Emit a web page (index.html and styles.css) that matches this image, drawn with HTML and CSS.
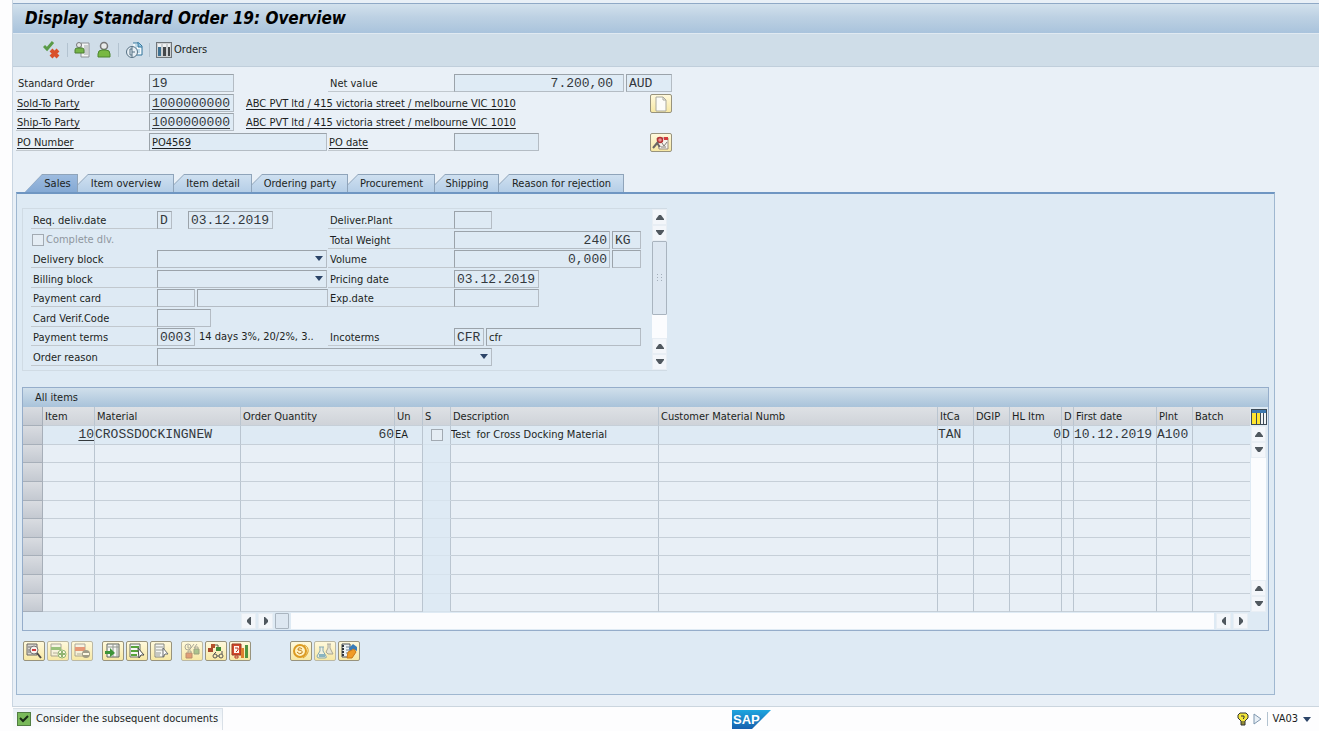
FILE: index.html
```html
<!DOCTYPE html>
<html lang="en">
<head>
    <meta charset="UTF-8">
    <meta name="viewport" content="width=device-width, initial-scale=1.0">
    <title>Display Standard Order 19: Overview</title>
    <link rel="stylesheet" href="styles.css">
</head>
<body>
    <!-- Shared arrow shapes -->
    <svg class="defs" width="0" height="0">
        <symbol id="up" viewBox="0 0 8 6"><path d="M0 6V5L3 1H5L8 5V6Z" fill="#50585f"/></symbol>
        <symbol id="down" viewBox="0 0 8 6"><path d="M0 0V1L3 5H5L8 1V0Z" fill="#50585f"/></symbol>
        <symbol id="left" viewBox="0 0 6 8"><path d="M5 0V8H4L1 5V3L4 0Z" fill="#50585f"/></symbol>
        <symbol id="right" viewBox="0 0 6 8"><path d="M1 0V8H2L5 5V3L2 0Z" fill="#50585f"/></symbol>
    </svg>

    <div class="window">
        <header>
            <h1 class="title-bar">Display Standard Order 19: Overview</h1>
            <div class="toolbar">
                <button class="tool" aria-label="Display or change">
                    <svg width="18" height="18" viewBox="0 0 18 18"><path d="M1 5L4 8L10 1" fill="none" stroke="#5a9b48" stroke-width="3"/><path d="M8 9L15 16M15 9L8 16" stroke="#d9502a" stroke-width="4"/></svg>
                </button>
                <span class="sep"></span>
                <button class="tool" aria-label="Header details">
                    <svg width="18" height="18" viewBox="0 0 18 18"><path d="M7 2H15V16H7Z" fill="#f3f4f4" stroke="#8d9297"/><path d="M10 5H14M10 7H14M10 9H14M10 11H14M10 13H14" stroke="#a1a6aa"/><circle cx="5" cy="4" r="2.5" fill="#e6e8e8" stroke="#777"/><path d="M1 12V9Q1 7 3 7H8Q10 7 10 9V12Z" fill="#74b447" stroke="#4d7d34"/></svg>
                </button>
                <button class="tool tool-person" aria-label="Sold-to party">
                    <svg width="16" height="18" viewBox="0 0 16 18"><circle cx="8" cy="5" r="3.5" fill="#e9ebea" stroke="#777" stroke-width="1.5"/><path d="M2 16V13Q2 9 6 9H10Q14 9 14 13V16Z" fill="#78b843" stroke="#4d8530"/></svg>
                </button>
                <span class="sep"></span>
                <button class="tool" aria-label="Document flow">
                    <svg width="18" height="18" viewBox="0 0 18 18"><path d="M8 2H14L17 5V14H9" fill="#f6fafc" stroke="#30749c"/><path d="M13 1V6H17" fill="#8cc0dd" stroke="#30749c"/><path d="M10 3H12V8H15V12H11Z" fill="#bcdaea"/><circle cx="7" cy="11" r="5.5" fill="#e6eef4" stroke="#557083"/><path d="M7 6V16M7 11H10M7 8H5V14H7" fill="none" stroke="#557083"/></svg>
                </button>
                <span class="sep"></span>
                <button class="tool tool-orders">
                    <svg width="16" height="16" viewBox="0 0 16 16"><rect x="0.5" y="0.5" width="15" height="15" fill="#cdd0d2" stroke="#6f7579"/><path d="M2 2H5V5H2ZM7 2H10V5H7ZM12 2H14V5H12Z" fill="#f0f2f3"/><path d="M2 5H5V14H2Z" fill="#3e7192"/><path d="M7 5H10V14H7ZM12 5H14V14H12Z" fill="#45484b"/></svg>
                    Orders
                </button>
            </div>
        </header>

        <main>
            <form class="order-head">
                <label class="lbl" for="order">Standard Order</label>
                <div class="cell wide"><input class="f mono w-date" id="order" value="19" readonly></div>
                <label class="lbl" for="net">Net value</label>
                <div class="cell wide"><input class="f mono right grow net" id="net" value="7.200,00" readonly><input class="f mono w-cur" aria-label="Currency" value="AUD" readonly></div>

                <label class="lbl linked" for="sold">Sold-To Party</label>
                <div class="cell"><input class="f mono linked w-date" id="sold" value="1000000000" readonly></div>
                <a class="party" href="#">ABC PVT ltd / 415 victoria street / melbourne VIC 1010</a>
                <button type="button" class="btn btn-head" aria-label="Create">
                    <svg width="16" height="16" viewBox="0 0 16 16"><path d="M3 1H10L13 4V15H3Z" fill="#fcfcf8" stroke="#aaa99c"/><path d="M10 1V4H13" fill="none" stroke="#aaa99c"/></svg>
                </button>

                <label class="lbl linked" for="ship">Ship-To Party</label>
                <div class="cell"><input class="f mono linked w-date" id="ship" value="1000000000" readonly></div>
                <a class="party" href="#">ABC PVT ltd / 415 victoria street / melbourne VIC 1010</a>
                <span></span>

                <label class="lbl linked" for="po">PO Number</label>
                <div class="cell wide"><input class="f linked w-po" id="po" value="PO4569" readonly></div>
                <label class="lbl linked" for="podate">PO date</label>
                <div class="cell"><input class="f mono w-date" id="podate" readonly></div>
                <button type="button" class="btn btn-head" aria-label="Header details">
                    <svg width="18" height="16" viewBox="0 0 18 16"><path d="M5 3H16V14H7Z" fill="#f6f3ed" stroke="#9a8c80"/><path d="M12 2H16V5H12Z" fill="#d23b3c"/><path d="M10 8L12 11L15 7M9 12H14" fill="none" stroke="#837c76"/><circle cx="8" cy="5" r="2.5" fill="#e89290" stroke="#b73435" stroke-width="1.5"/><path d="M6 7L1 13M5 8L8 12" stroke="#6b6663" stroke-width="2"/></svg>
                </button>
            </form>

            <div class="tabs" role="tablist">
                <button class="tab active" role="tab" aria-selected="true"><span>Sales</span></button>
                <button class="tab t-96" role="tab"><span>Item overview</span></button>
                <button class="tab t-78" role="tab"><span>Item detail</span></button>
                <button class="tab t-96" role="tab"><span>Ordering party</span></button>
                <button class="tab t-87" role="tab"><span>Procurement</span></button>
                <button class="tab t-64" role="tab"><span>Shipping</span></button>
                <button class="tab t-125" role="tab"><span>Reason for rejection</span></button>
            </div>

            <section class="panel">
                <div class="sales-box">
                    <form class="sales">
                        <label class="lbl" for="req">Req. deliv.date</label>
                        <div class="cell"><input class="f mono w-one" aria-label="Date type" value="D" readonly><input class="f mono w-date after-one" id="req" value="03.12.2019" readonly></div>
                        <label class="lbl" for="plant">Deliver.Plant</label>
                        <div class="cell"><input class="f mono w-four" id="plant" readonly></div>

                        <div class="check-row"><input type="checkbox" class="check" id="complete" disabled><label for="complete">Complete dlv.</label></div>
                        <span></span>
                        <label class="lbl" for="weight">Total Weight</label>
                        <div class="cell"><input class="f mono right grow" id="weight" value="240" readonly><input class="f mono w-unit" aria-label="Weight unit" value="KG" readonly></div>

                        <label class="lbl" for="dblock">Delivery block</label>
                        <div class="cell drop"><select class="f" id="dblock"><option></option></select></div>
                        <label class="lbl" for="volume">Volume</label>
                        <div class="cell"><input class="f mono right grow" id="volume" value="0,000" readonly><input class="f mono w-unit" aria-label="Volume unit" readonly></div>

                        <label class="lbl" for="bblock">Billing block</label>
                        <div class="cell drop"><select class="f" id="bblock"><option></option></select></div>
                        <label class="lbl" for="pricing">Pricing date</label>
                        <div class="cell"><input class="f mono w-date" id="pricing" value="03.12.2019" readonly></div>

                        <label class="lbl" for="card">Payment card</label>
                        <div class="cell"><input class="f mono w-four" id="card" readonly><input class="f mono grow" aria-label="Card number" readonly></div>
                        <label class="lbl" for="exp">Exp.date</label>
                        <div class="cell"><input class="f mono w-date" id="exp" readonly></div>

                        <label class="lbl" for="verif">Card Verif.Code</label>
                        <div class="cell"><input class="f mono w-verif" id="verif" readonly></div>
                        <span></span>
                        <span></span>

                        <label class="lbl" for="terms">Payment terms</label>
                        <div class="cell"><input class="f mono w-four" id="terms" value="0003" readonly><span class="terms-text">14 days 3%, 20/2%, 3..</span></div>
                        <label class="lbl" for="inco">Incoterms</label>
                        <div class="cell"><input class="f mono w-inco" id="inco" value="CFR" readonly><input class="f grow" aria-label="Incoterms place" value="cfr" readonly></div>

                        <label class="lbl" for="reason">Order reason</label>
                        <div class="cell drop reason"><select class="f" id="reason"><option></option></select></div>
                    </form>
                    <div class="vscroll">
                        <button class="arrow" aria-label="Top"><svg width="8" height="6"><use href="#up"/></svg></button>
                        <button class="arrow" aria-label="Down"><svg width="8" height="6"><use href="#down"/></svg></button>
                        <div class="thumb"><svg width="6" height="8" viewBox="0 0 6 8"><path d="M0 0H1V1H0ZM4 0H5V1H4ZM0 3H1V4H0ZM4 3H5V4H4ZM0 6H1V7H0ZM4 6H5V7H4Z" fill="#a3aeba"/></svg></div>
                        <div class="track"></div>
                        <button class="arrow" aria-label="Up"><svg width="8" height="6"><use href="#up"/></svg></button>
                        <button class="arrow" aria-label="Bottom"><svg width="8" height="6"><use href="#down"/></svg></button>
                    </div>
                </div>

                <div class="items">
                    <h2 class="items-title">All items</h2>
                    <div class="items-body">
                        <table class="grid">
                            <colgroup>
                                <col class="c20"><col class="c52"><col class="c146"><col class="c154"><col class="c28"><col class="c28"><col class="c208"><col><col class="c36"><col class="c36"><col class="c52"><col class="c12"><col class="c83"><col class="c36"><col class="c57">
                            </colgroup>
                            <thead>
                                <tr><th class="sel"></th><th>Item</th><th>Material</th><th>Order Quantity</th><th>Un</th><th>S</th><th>Description</th><th>Customer Material Numb</th><th>ItCa</th><th>DGIP</th><th>HL Itm</th><th>D</th><th>First date</th><th>Plnt</th><th>Batch</th></tr>
                            </thead>
                            <tbody id="rows">
                                <tr class="filled"><td class="sel"></td><td class="mono right"><a href="#">10</a></td><td class="mono">CROSSDOCKINGNEW</td><td class="mono right">60</td><td>EA</td><td class="st"><input type="checkbox" class="check" aria-label="Schedule status" disabled></td><td>Test&nbsp; for Cross Docking Material</td><td></td><td class="mono">TAN</td><td></td><td class="mono right">0</td><td class="mono">D</td><td class="mono">10.12.2019</td><td class="mono">A100</td><td></td></tr>
                            </tbody>
                        </table>
                        <div class="side">
                            <button class="config" aria-label="Table settings"><svg width="16" height="16" viewBox="0 0 16 16"><path d="M0 0H16V16H0Z" fill="#3c4a56"/><path d="M1 1H15V4H1Z" fill="#3d78b0"/><path d="M1 4H5V15H1ZM6 4H9V15H6Z" fill="#ffe52f"/><path d="M10 4H12V15H10ZM13 4H15V15H13Z" fill="#f1f4f6"/></svg></button>
                            <div class="vscroll">
                                <button class="arrow" aria-label="First row"><svg width="8" height="6"><use href="#up"/></svg></button>
                                <button class="arrow" aria-label="Next row"><svg width="8" height="6"><use href="#down"/></svg></button>
                                <div class="track"></div>
                                <button class="arrow" aria-label="Previous row"><svg width="8" height="6"><use href="#up"/></svg></button>
                                <button class="arrow" aria-label="Last row"><svg width="8" height="6"><use href="#down"/></svg></button>
                            </div>
                        </div>
                    </div>
                    <div class="hscroll">
                        <button class="arrow" aria-label="First column"><svg width="6" height="8"><use href="#left"/></svg></button>
                        <button class="arrow" aria-label="Next column"><svg width="6" height="8"><use href="#right"/></svg></button>
                        <div class="thumb"></div>
                        <div class="track"></div>
                        <button class="arrow" aria-label="Previous column"><svg width="6" height="8"><use href="#left"/></svg></button>
                        <button class="arrow" aria-label="Last column"><svg width="6" height="8"><use href="#right"/></svg></button>
                    </div>
                </div>

                <div class="actions">
                    <div class="group">
                        <button class="btn" aria-label="Item details"><svg width="18" height="16" viewBox="0 0 18 16"><path d="M2 1H12V12H2Z" fill="#d9d6d0" stroke="#6b6762"/><path d="M3 4H11M3 7H6M3 9H6" stroke="#777"/><circle cx="9" cy="7" r="4" fill="#f8f1ed" stroke="#777"/><path d="M7 7H11" stroke="#cf3a3a" stroke-width="2"/><path d="M12 10L16 15" stroke="#4c4a48" stroke-width="2"/></svg></button>
                        <button class="btn pale" aria-label="Insert row"><svg width="18" height="16" viewBox="0 0 18 16"><path d="M2 1H12V13H2Z" fill="#f3f3ee" stroke="#777"/><path d="M2 4H12V7H2Z" fill="#5aa14a"/><path d="M4 10H9" stroke="#888"/><circle cx="13" cy="11" r="4" fill="#fff" stroke="#4a8f45"/><path d="M13 8V14M10 11H16" stroke="#4a8f45" stroke-width="2"/></svg></button>
                        <button class="btn pale" aria-label="Delete row"><svg width="18" height="16" viewBox="0 0 18 16"><path d="M2 1H12V13H2Z" fill="#f3f3ee" stroke="#777"/><path d="M2 4H12V8H2Z" fill="#d95e42"/><path d="M4 11H9" stroke="#888"/><circle cx="13" cy="11" r="4" fill="#666"/><path d="M10 11H16" stroke="#fff" stroke-width="2"/></svg></button>
                    </div>
                    <div class="group">
                        <button class="btn" aria-label="Position"><svg width="18" height="16" viewBox="0 0 18 16"><path d="M3 1H15V14H3Z" fill="#f5f6f2" stroke="#5d625d"/><path d="M9 1V14M4 4H15M13 2V14" stroke="#92988f"/><path d="M1 8H6V5L11 10L6 14V11H1Z" fill="#3c9438"/></svg></button>
                        <button class="btn" aria-label="Select all"><svg width="18" height="16" viewBox="0 0 18 16"><path d="M2 1H12V14H2Z" fill="#f5f6f2" stroke="#6b7068"/><path d="M3 4H11M3 8H11M3 12H9" stroke="#55a33a" stroke-width="2"/><path d="M10 5L16 12H13L11 15Z" fill="#fff" stroke="#464946"/></svg></button>
                        <button class="btn" aria-label="Deselect all"><svg width="18" height="16" viewBox="0 0 18 16"><path d="M3 1H12V14H3Z" fill="#f5f6f2" stroke="#85877f"/><path d="M4 4H11M4 7H11M4 10H9M4 12H8" stroke="#989b94"/><path d="M11 5L16 11H13L11 14Z" fill="#fff" stroke="#696d70"/></svg></button>
                    </div>
                    <div class="group">
                        <button class="btn pale" aria-label="Availability"><svg width="18" height="16" viewBox="0 0 18 16"><circle cx="5" cy="4" r="3" fill="none" stroke="#777"/><path d="M5 2V5H7M8 5L11 1M11 5L14 1" fill="none" stroke="#777"/><path d="M11 6H16V11H11Z" fill="#75a66e" stroke="#5f7058"/><path d="M3 10H9V15H3Z" fill="#d26a51" stroke="#915244"/><path d="M5 10V8H8V10M12 6V4H15V6" fill="none" stroke="#777"/></svg></button>
                        <button class="btn" aria-label="Schedule lines"><svg width="18" height="16" viewBox="0 0 18 16"><path d="M4 1H8V5H4Z" fill="#b4512b"/><path d="M1 5H6V9H1Z" fill="#a8482b"/><path d="M9 4H14V8H9Z" fill="#3f8a36"/><path d="M8 2H11V4" fill="none" stroke="#5e564b"/><circle cx="8" cy="13" r="2" fill="none" stroke="#555"/><circle cx="14" cy="13" r="2" fill="none" stroke="#555"/><path d="M10 13H12M7 11L9 9M15 11V8" stroke="#555"/></svg></button>
                        <button class="btn" aria-label="Item conditions"><svg width="18" height="16" viewBox="0 0 18 16"><path d="M1 1H10V12H1Z" fill="#d4472b" stroke="#963a25"/><path d="M3 3H8V10H3Z" fill="#fff5ed"/><path d="M4 5H7V7L5 9M4 13H7V15H4Z" fill="none" stroke="#b73b26"/><path d="M10 5H13V15H10Z" fill="#df7e2e"/><path d="M14 2H17V15H14Z" fill="#4f9340"/></svg></button>
                    </div>
                    <div class="group apart">
                        <button class="btn" aria-label="Pricing"><svg width="18" height="16" viewBox="0 0 18 16"><circle cx="8" cy="8" r="6" fill="#fff2c2" stroke="#dc9b22" stroke-width="2"/><path d="M12 2Q17 4 16 9Q15 13 11 15" fill="none" stroke="#dc9b22"/><path d="M10 6Q6 3 6 7Q11 7 10 10Q7 12 5 9" fill="none" stroke="#c07b16"/></svg></button>
                        <button class="btn pale" aria-label="Batch"><svg width="18" height="16" viewBox="0 0 18 16"><path d="M11 1H15M12 1V5L10 9L12 11H17L16 9L14 5V1" fill="#d9dde0" stroke="#777"/><path d="M3 4H8M4 4V8L1 13Q1 15 3 15H9Q11 15 10 13L7 8V4" fill="#eaf3f8" stroke="#3a7ba8"/><path d="M3 11H9V14H3Z" fill="#3f8fca"/></svg></button>
                        <button class="btn" aria-label="Configuration"><svg width="18" height="16" viewBox="0 0 18 16"><path d="M2 1H10V14H2Z" fill="#edf2f5" stroke="#4b5157"/><path d="M2 3H4M2 6H4M2 9H4M2 12H4" stroke="#30363b" stroke-width="2"/><path d="M6 4H10M6 7H9M6 10H8" stroke="#6b7d8b"/><path d="M9 5L13 1L17 4V8L13 6L10 9Z" fill="#3a7db8"/><path d="M8 9L14 6L16 9L12 15H7Z" fill="#f09b25" stroke="#c97817"/></svg></button>
                    </div>
                </div>
            </section>
        </main>
    </div>

    <footer class="status">
        <div class="message">
            <svg width="14" height="14" viewBox="0 0 14 14"><rect x="0.5" y="0.5" width="13" height="13" fill="#79b95a" stroke="#527e43"/><path d="M3 6L6 9L11 4" fill="none" stroke="#182b15" stroke-width="2"/></svg>
            <span>Consider the subsequent documents</span>
        </div>
        <svg class="logo" width="40" height="19" viewBox="0 0 40 19">
            <defs><linearGradient id="sap" x1="0" y1="0" x2="0" y2="1"><stop offset="0" stop-color="#1ea5df"/><stop offset="1" stop-color="#1560ae"/></linearGradient></defs>
            <path d="M0 0H39L20 19H0Z" fill="url(#sap)"/>
            <text class="logo-text" x="1" y="14">SAP</text>
        </svg>
        <div class="session">
            <svg width="12" height="14" viewBox="0 0 12 14"><path d="M3 1H9L11 3V6L8 9V13H4V9L1 6V3Z" fill="#f3e63a" stroke="#333"/><path d="M4 4H7V6L6 7M4 10H8M4 12H8" fill="none" stroke="#333"/></svg>
            <svg width="9" height="12" viewBox="0 0 9 12"><path d="M1 1L8 6L1 11Z" fill="#e8eff6" stroke="#7f97ae"/></svg>
            <span class="sep"></span>
            <button class="tcode">VA03</button>
        </div>
    </footer>

    <script>
// Fill the table with empty rows below the order item
const rows = document.getElementById('rows');
const columns = 15;

for (let i = 0; i < 9; i++) {
    const row = rows.insertRow();
    for (let c = 0; c < columns; c++) {
        const cell = row.insertCell();
        if (c === 0) cell.className = 'sel';
        if (c === 5) cell.className = 'st';
    }
}
    </script>
</body>
</html>
```

FILE: styles.css
```css
/* styles.css */

* {
    box-sizing: border-box;
}

body {
    margin: 0;
    min-height: 100vh;
    display: flex;
    flex-direction: column;
    background-color: #fdfdfe;
    color: #1c1f22;
    font-family: 'DejaVu Sans Condensed', 'DejaVu Sans', sans-serif;
    font-size: 11px;
    line-height: 16px;
}

button, input, select {
    margin: 0;
    padding: 0;
    border: 0;
    font: inherit;
    color: inherit;
}

button {
    background: none;
    display: flex;
    align-items: center;
    justify-content: center;
}

a {
    color: inherit;
    text-underline-offset: 2px;
}

.defs {
    position: absolute;
}

.window {
    flex: 1;
    display: flex;
    flex-direction: column;
    margin-left: 12px;
    padding-top: 3px;
    background-color: #e9f0f7;
    border-left: 1px solid #c9d5e1;
    border-bottom: 1px solid #cbd5de;
}

.title-bar {
    margin: 0;
    height: 30px;
    padding: 2px 12px;
    border-top: 1px solid #8fa9c6;
    background: linear-gradient(#d2e1ed, #bdd1e3 45%, #a9c3dc);
    color: #000;
    font-size: 17px;
    font-style: italic;
    font-weight: bold;
    line-height: 24px;
}

.toolbar {
    display: flex;
    align-items: center;
    height: 34px;
    padding-left: 30px;
    background-color: #cfdde8;
    border-top: 1px solid #e0e9f1;
    border-bottom: 1px solid #c0cedb;
}

.tool-person {
    margin-left: 4px;
}

.tool-orders {
    gap: 2px;
}

.sep {
    width: 1px;
    height: 14px;
    margin: 0 6px;
    background-color: #b3c3d0;
}

main {
    flex: 1;
    display: flex;
    flex-direction: column;
    padding: 7px 44px 11px 3px;
}

/* Labels and fields */
.order-head {
    display: grid;
    grid-template-columns: 133px 97px 82px 126px 196px 22px;
    grid-auto-rows: 20px 19px;
}

.lbl {
    height: 18px;
    padding: 2px 2px 0;
    border-bottom: 1px solid #c1c8ce;
    line-height: 15px;
    white-space: nowrap;
}

.linked {
    text-decoration: underline;
    text-underline-offset: 2px;
}

.lbl.linked {
    padding-left: 1px;
}

.cell {
    display: flex;
    gap: 2px;
    height: 18px;
    min-width: 0;
}

.wide {
    grid-column: span 2;
}

.f {
    height: 18px;
    min-width: 0;
    padding: 0 2px;
    background-color: #dfebf5;
    border: 1px solid;
    border-color: #9ba3aa #b4bcc4 #b4bcc4 #9ba3aa;
    border-radius: 0;
}

.mono {
    color: #33383c;
    font-family: 'Liberation Mono', 'Courier New', monospace;
    font-size: 13px;
}

.right {
    text-align: right;
}

.grow {
    flex: 1;
}

.net {
    padding-right: 10px;
}

.w-date {
    width: 85px;
}

.w-po {
    width: 178px;
}

.w-cur {
    width: 46px;
}

.w-one {
    width: 15px;
}

.after-one {
    margin-left: 14px;
}

.w-four {
    width: 38px;
}

.w-unit {
    width: 29px;
}

.w-verif {
    width: 54px;
}

.w-inco {
    width: 30px;
}

.party {
    grid-column: span 3;
    padding-top: 2px;
    line-height: 15px;
    white-space: nowrap;
}

.btn {
    width: 22px;
    height: 20px;
    background: linear-gradient(#fff9dc, #f7e8a4);
    border: 1px solid #98937d;
    border-radius: 2px;
}

.btn-head {
    height: 19px;
}

.pale {
    border-color: #bbb8a4;
}

.pale svg {
    opacity: 0.6;
}

/* Tabs */
.tabs {
    display: flex;
    height: 18px;
    margin-top: 22px;
    padding-left: 9px;
}

.tab {
    position: relative;
    background-color: #8fa4ba;
    clip-path: polygon(10px 0, 100% 0, 100% 100%, 0 100%, 0 10px);
}

/* The tab fill, one pixel inside its edge */
.tab::before {
    content: "";
    position: absolute;
    inset: 1px 1px 0 0;
    background: linear-gradient(#cfe0f0, #b5cee7);
    clip-path: polygon(10px 0, 100% 0, 100% 100%, 0 100%, 0 10px);
}

.tab span {
    position: relative;
    padding-top: 2px;
    white-space: nowrap;
}

.tab.active {
    width: 53px;
    padding-left: 12px;
    clip-path: polygon(17px 0, 100% 0, 100% 100%, 0 100%);
}

.tab.active::before {
    background: linear-gradient(#9dbbdf, #84a9d4);
    clip-path: polygon(17px 0, 100% 0, 100% 100%, 0 100%);
}

.t-64 {
    width: 64px;
}

.t-78 {
    width: 78px;
}

.t-87 {
    width: 87px;
}

.t-96 {
    width: 96px;
}

.t-125 {
    width: 125px;
}

.panel {
    flex: 1;
    padding: 14px 5px 0 5px;
    background-color: #deeaf4;
    border: 1px solid #9fb7d0;
    border-top: 2px solid #6f96c2;
}

.sales-box {
    display: flex;
    width: 645px;
    border: 1px solid #d0dbe4;
    border-right: 0;
}

.sales {
    flex: 1;
    display: grid;
    grid-template-columns: 126px 171px 126px 187px;
    grid-auto-rows: 20px 19px;
    padding: 2px 0 3px 8px;
}

.sales .f {
    background-color: #deeaf4;
}

.check-row {
    display: flex;
    align-items: center;
    gap: 2px;
    height: 18px;
    padding-left: 1px;
    color: #8f979f;
}

.check {
    appearance: none;
    width: 12px;
    height: 12px;
    border: 1px solid #a2aab2;
    background-color: #e5edf4;
}

.drop {
    position: relative;
    padding-right: 1px;
}

.drop select {
    appearance: none;
    width: 100%;
}

.drop::after {
    content: "";
    position: absolute;
    top: 6px;
    right: 5px;
    border: 4px solid transparent;
    border-top: 5px solid #2b4468;
    border-bottom: 0;
}

.sales .reason {
    grid-column: 2 / -1;
    width: 336px;
}

.terms-text {
    padding-left: 2px;
    line-height: 18px;
    white-space: nowrap;
}

/* Scrollbars */
.vscroll {
    display: flex;
    flex-direction: column;
    width: 15px;
    background-color: #fbfcfe;
}

.arrow {
    flex: none;
    width: 15px;
    height: 16px;
    background-color: #f3f6fa;
    border: 1px solid #e8eef4;
}

.thumb {
    display: flex;
    align-items: center;
    justify-content: center;
    background-color: #dde7f1;
    border: 1px solid #a9b4bf;
    border-radius: 1px;
}

.vscroll .thumb {
    height: 74px;
}

.track {
    flex: 1;
    background-color: #fbfcfe;
}

/* Item table */
.items {
    margin-top: 16px;
    border: 1px solid #95adca;
}

.items-title {
    margin: 0;
    height: 19px;
    padding-left: 12px;
    background: linear-gradient(#d0dfeb, #a9c3da);
    font-size: 11px;
    font-weight: normal;
    line-height: 19px;
}

.items-body {
    display: flex;
}

.grid {
    flex: 1;
    width: 100%;
    table-layout: fixed;
    border-spacing: 0;
    background-color: #e8eff6;
}

.grid th, .grid td {
    height: 19px;
    padding: 0;
    border-right: 1px solid #bac5d0;
    border-bottom: 1px solid #c6cfd8;
    line-height: 14px;
    overflow: hidden;
    white-space: nowrap;
}

.grid tr:nth-child(5n+2) td, .grid tr:nth-child(5n+5) td {
    height: 18px;
}

.grid th:last-child, .grid td:last-child {
    border-right: 0;
}

.grid th {
    padding: 2px 0 0 2px;
    background: linear-gradient(#dee1e5, #cfd3d9);
    font-weight: normal;
    text-align: left;
}

.grid .filled td {
    background-color: #deeaf4;
}

.grid .sel, .grid .filled .sel {
    background: linear-gradient(#d9dce1, #c4c9d1);
    border-color: #a7afb9;
}

.grid .st {
    background-color: #deeaf4;
    border-bottom-color: #d6e2ec;
    text-align: center;
}

.st .check {
    vertical-align: middle;
}

.c12 { width: 12px; }
.c20 { width: 20px; }
.c28 { width: 28px; }
.c36 { width: 36px; }
.c52 { width: 52px; }
.c57 { width: 57px; }
.c83 { width: 83px; }
.c146 { width: 146px; }
.c154 { width: 154px; }
.c208 { width: 208px; }

.side {
    display: flex;
    flex-direction: column;
    width: 18px;
    padding-left: 1px;
}

.config {
    height: 19px;
    width: 16px;
}

.side .vscroll {
    flex: 1;
}

.hscroll {
    display: flex;
    align-items: center;
    gap: 2px;
    height: 18px;
    padding: 0 20px 0 218px;
}

.hscroll .thumb {
    width: 14px;
    height: 16px;
}

.hscroll .track {
    height: 16px;
}

.actions {
    display: flex;
    gap: 9px;
    padding: 10px 0 33px 1px;
}

.group {
    display: flex;
    gap: 2px;
}

.apart {
    margin-left: 30px;
}

/* Status bar */
.status {
    display: grid;
    grid-template-columns: 21fr auto 16fr;
    align-items: center;
    height: 24px;
    padding-left: 13px;
}

.message {
    display: flex;
    align-items: center;
    justify-self: start;
    gap: 5px;
    height: 22px;
    padding: 0 4px 2px;
    border: 1px solid #d9e0e7;
    border-bottom: 0;
    border-left: 0;
    background: linear-gradient(#e9f0f6, #fdfdfe);
}

.logo-text {
    fill: #fff;
    font-family: 'Liberation Sans', Arial, sans-serif;
    font-size: 13px;
    font-weight: bold;
}

.session {
    display: flex;
    align-items: center;
    justify-self: end;
    gap: 4px;
    padding-right: 8px;
}

.session .sep {
    margin: 0 1px;
}

.tcode {
    gap: 5px;
}

.tcode::after {
    content: "";
    border: 4px solid transparent;
    border-top: 5px solid #2b4468;
    border-bottom: 0;
}
```
